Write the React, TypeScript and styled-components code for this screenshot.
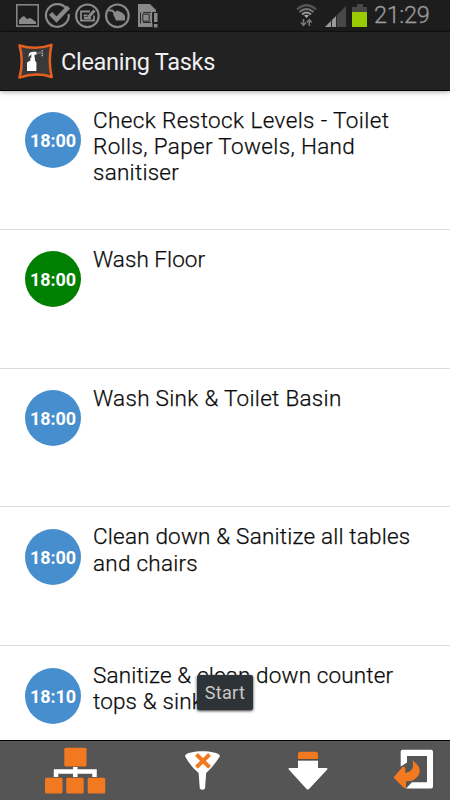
import React from 'react';
import styled, { createGlobalStyle } from 'styled-components';

const GlobalStyle = createGlobalStyle`
  * { box-sizing: border-box; }
  html, body { margin: 0; padding: 0; }
  body { font-family: Roboto, "Liberation Sans", sans-serif; background: #fff; overflow: hidden; }
  svg { display: block; }
`;

const Screen = styled.div`
  width: 450px;
  height: 800px;
  display: flex;
  flex-direction: column;
  overflow: hidden;
  background: #fff;
`;

const StatusBar = styled.header`
  flex: none;
  height: 32px;
  display: flex;
  justify-content: space-between;
  background: #1d1d1d;
  border-bottom: 1px solid #111;
`;

const Clock = styled.time`
  width: 79px;
  padding-left: 3px;
  color: #9a9a9a;
  font-size: 23.5px;
  line-height: 31px;
  letter-spacing: -0.35px;
  font-weight: 300;
  -webkit-text-stroke: 0.3px #9a9a9a;
`;

const StatusRight = styled.div`
  display: flex;
`;

const TitleBar = styled.div`
  flex: none;
  height: 59px;
  display: flex;
  align-items: center;
  padding: 0 0 0 17px;
  background: #222;
  border-bottom: 1px solid #000;
  position: relative;
  z-index: 1;
  box-shadow: 0 1px 5px rgba(0, 0, 0, 0.35);
`;

const Title = styled.h1`
  margin: 1px 0 0 6px;
  color: #f0f0f0;
  font-size: 23.5px;
  line-height: 30px;
  font-weight: 400;
  letter-spacing: -0.3px;
  white-space: nowrap;
`;

const TaskList = styled.ul`
  flex: 1;
  min-height: 0;
  margin: 0;
  padding: 0;
  list-style: none;
  overflow: hidden;
`;

const TaskRow = styled.li`
  height: 138.8px;
  display: flex;
  align-items: flex-start;
  padding: 21.4px 0 0 25px;
  border-bottom: 1px solid #dcdcdc;
`;

const TimeBadge = styled.span<{ $done?: boolean }>`
  flex: none;
  width: 56px;
  height: 56px;
  border-radius: 50%;
  background: ${(p) => (p.$done ? '#008000' : '#468ecd')};
  color: #fff;
  font-size: 18px;
  font-weight: 700;
  line-height: 58px;
  text-align: center;
  letter-spacing: -0.1px;
`;

const TaskText = styled.p`
  margin: -5.4px 0 0 12px;
  color: #0a0a0a;
  font-size: 22.5px;
  line-height: 26.2px;
  font-weight: 300;
  -webkit-text-stroke: 0.25px #0a0a0a;
`;

const TaskLine = styled.span<{ $tracking: number }>`
  display: block;
  white-space: nowrap;
  letter-spacing: ${(p) => p.$tracking}px;
`;

const Toolbar = styled.nav`
  flex: none;
  height: 60px;
  display: flex;
  background: #555;
  border-top: 1px solid #000;
`;

const ToolButton = styled.button<{ $width: number }>`
  width: ${(p) => p.$width}px;
  height: 59px;
  padding: 0;
  border: 0;
  background: none;
`;

const Toast = styled.div`
  position: absolute;
  left: 197px;
  top: 675px;
  z-index: 2;
  width: 56px;
  height: 35px;
  border-radius: 2px;
  background: #2d3337;
  color: #c8c8c8;
  font-size: 18px;
  line-height: 36px;
  text-align: center;
  letter-spacing: 0.3px;
  box-shadow: 0 1px 3px rgba(0, 0, 0, 0.8);
`;

type Line = { text: string; tracking: number };
type Task = { time: string; done?: boolean; lines: Line[] };

const tasks: Task[] = [
  {
    time: '18:00',
    lines: [
      { text: 'Check Restock Levels - Toilet', tracking: 0.4 },
      { text: 'Rolls, Paper Towels, Hand', tracking: 0.35 },
      { text: 'sanitiser', tracking: 0.25 },
    ],
  },
  { time: '18:00', done: true, lines: [{ text: 'Wash Floor', tracking: 0.05 }] },
  { time: '18:00', lines: [{ text: 'Wash Sink & Toilet Basin', tracking: 0.3 }] },
  {
    time: '18:00',
    lines: [
      { text: 'Clean down & Sanitize all tables', tracking: 0.2 },
      { text: 'and chairs', tracking: 0.25 },
    ],
  },
  {
    time: '18:10',
    lines: [
      { text: 'Sanitize & clean down counter', tracking: 0.15 },
      { text: 'tops & sinks', tracking: 0.15 },
    ],
  },
];

const NotificationIcons = () => (
  <svg width="170" height="31" viewBox="0 0 170 31" fill="none" stroke="#898989" strokeWidth="1.8">
    <rect x="16.8" y="4.8" width="21.4" height="21.4" strokeWidth="1.5" />
    <path d="M19 24v-4l3-3 2-1 3 3 3-1 2 1 4 3v2z" fill="#898989" stroke="none" />
    <path d="M66.8 9A11.4 11.4 0 1 0 68.7 14" strokeWidth="2.2" />
    <path d="M50.5 13.5l6 6L68.5 7" strokeWidth="4.4" />
    <circle cx="87.4" cy="15.8" r="11.3" strokeWidth="2.2" />
    <path d="M90 11.5h-9v9h13v-5M83.5 15.5h4M84 18h7" strokeWidth="1.8" />
    <path d="M88.5 17l6-6.5" strokeWidth="3" />
    <circle cx="117.4" cy="15.8" r="11.3" strokeWidth="2.2" />
    <path d="M108.5 10.5l3.5 0 3.5 3" strokeWidth="2.2" />
    <path d="M113 14l4-3.5 5 2 3 3v5h-9z" fill="#898989" stroke="none" />
    <path d="M138 4h12l6 6v17h-18z" fill="#898989" stroke="none" />
    <path d="M140.5 12.5v11M143 12.5h8M143 22.5h8M152.5 12.5v11" stroke="#282828" strokeWidth="1" />
    <path d="M142.8 14.2h6.4v7h-6.4z" stroke="#282828" strokeWidth="1" />
    <path d="M152.5 12h6v16h-6z" fill="#1d1d1d" stroke="none" />
    <path d="M154 13h3.5v9H154zM154 24h3.5v3.5H154z" fill="#898989" stroke="none" />
  </svg>
);

const SystemIcons = () => (
  <svg width="75" height="31" viewBox="296 0 75 31" fill="none">
    <path d="M297 9.5Q306.5 1 316 9.5" stroke="#555" strokeWidth="2.3" />
    <path d="M299.5 12Q306.5 6 313.5 12" stroke="#777" strokeWidth="2" />
    <path d="M302 14.5q4.5-4 9 0" stroke="#999" strokeWidth="1.8" />
    <path d="M304 15.5q2.5-1.5 5 0l-2.5 2.5z" fill="#aaa" />
    <path d="M303.5 19v6M301 22.5l2.5 2.8 2.5-2.8M309.3 26v-6M306.8 22.5l2.5-2.8 2.5 2.8" stroke="#777" strokeWidth="1.6" />
    <path d="M346 6v21h-21z" fill="#484848" />
    <path d="M336.3 15.7V27H325z" fill="#999" />
    <path d="M331.5 19v8M336.5 15v12" stroke="#2b2b2b" />
    <path d="M352 7h5V4h6v3h4v5h-15z" fill="#484848" />
    <path d="M352 12h15v15h-15z" fill="#99cb00" />
  </svg>
);

const AppLogo = () => (
  <svg width="38" height="38" viewBox="0 0 38 38" fill="none">
    <path d="M2.5 3.5Q19 8.5 34.5 2.8Q31 19 34.7 35Q19 30 2.5 35.5Q7 19 2.5 3.5Z" fill="#393939" stroke="#e65f1d" strokeWidth="2.5" strokeLinejoin="round" />
    <path d="M12 11.5q1.5-1.8 4-1.8h3.5v3h-2v3.5h-3.2v-4l-2.8 3z" fill="#fff" />
    <path d="M13.4 15.8h4.5v2.7l1.5 2V29H10v-8.5l3.4-2z" fill="#fff" />
    <path d="M20.5 11.3h1M22.5 10.5h1M24.5 8.8h1.5M24.5 11.3h1.5M24.5 13.5h1.5" stroke="#bbb" strokeWidth="1.3" />
  </svg>
);

const HierarchyIcon = () => (
  <svg width="150" height="59" viewBox="0 741 150 59" fill="none">
    <path d="M56 777v-5.5h38.5v5.5M75.3 767v10" stroke="#fff" strokeWidth="4.5" />
    <g fill="#f27920">
      <rect x="64.3" y="747.7" width="22.2" height="18.8" rx="1.5" />
      <rect x="45" y="777.7" width="17.5" height="15.8" rx="1.5" />
      <rect x="66.2" y="777.7" width="17.5" height="15.8" rx="1.5" />
      <rect x="87.7" y="777.7" width="17.5" height="15.8" rx="1.5" />
    </g>
  </svg>
);

const FilterIcon = () => (
  <svg width="105" height="59" viewBox="150 741 105 59" fill="none">
    <path d="M185 756C187 749.8 217.8 749.8 220 756Q214 766 206.2 773L205 788.5Q202.4 791.2 199.8 788.5L198.6 773Q190 766 185 756Z" fill="#fff" />
    <path d="M196.5 754.5L209.5 767.3M209.5 754.5L196.5 767.3" stroke="#f27920" strokeWidth="4" />
  </svg>
);

const DownloadIcon = () => (
  <svg width="105" height="59" viewBox="255 741 105 59" fill="none">
    <path d="M298 759.2V754Q298 751.7 300.3 751.7H315.5Q318 751.7 318 754V759.2Z" fill="#f27920" />
    <path d="M298 760.5h20V768h8.5q1.5.2.7 1.5L309.5 788.5q-1.7 1.8-3.4 0L288.8 769.5q-.8-1.3.7-1.5h8.5z" fill="#fff" />
    <path d="M298 759.8h20" stroke="#444" />
  </svg>
);

const ExitIcon = () => (
  <svg width="90" height="59" viewBox="360 741 90 59" fill="none">
    <path d="M407 762.5l-6.3 4.1V751.5Q400.7 749.7 402.5 749.7H431Q433 749.7 433 751.7V786.5Q433 788.5 431 788.5H406l6-6.2H427V756H407z" fill="#fff" />
    <path d="M412.5 760.2Q427 771.5 412.5 780.8L406 781.3V787.5Q405 789 403.5 787.5L393.5 777.5L402.7 766.8Q404.7 765.5 405.3 768.5V773Q415.3 772 412.5 760.2Z" fill="#f27920" />
  </svg>
);

export default function App() {
  return (
    <>
      <GlobalStyle />
      <Screen>
        <StatusBar>
          <NotificationIcons />
          <StatusRight>
            <SystemIcons />
            <Clock>21:29</Clock>
          </StatusRight>
        </StatusBar>
        <TitleBar>
          <AppLogo />
          <Title>Cleaning Tasks</Title>
        </TitleBar>
        <TaskList>
          {tasks.map((task) => (
            <TaskRow key={task.lines[0].text}>
              <TimeBadge $done={task.done}>{task.time}</TimeBadge>
              <TaskText>
                {task.lines.map((line) => (
                  <TaskLine key={line.text} $tracking={line.tracking}>{line.text}</TaskLine>
                ))}
              </TaskText>
            </TaskRow>
          ))}
        </TaskList>
        <Toolbar>
          <ToolButton $width={150} aria-label="Locations"><HierarchyIcon /></ToolButton>
          <ToolButton $width={105} aria-label="Clear filter"><FilterIcon /></ToolButton>
          <ToolButton $width={105} aria-label="Download"><DownloadIcon /></ToolButton>
          <ToolButton $width={90} aria-label="Exit"><ExitIcon /></ToolButton>
        </Toolbar>
        <Toast role="status">Start</Toast>
      </Screen>
    </>
  );
}
